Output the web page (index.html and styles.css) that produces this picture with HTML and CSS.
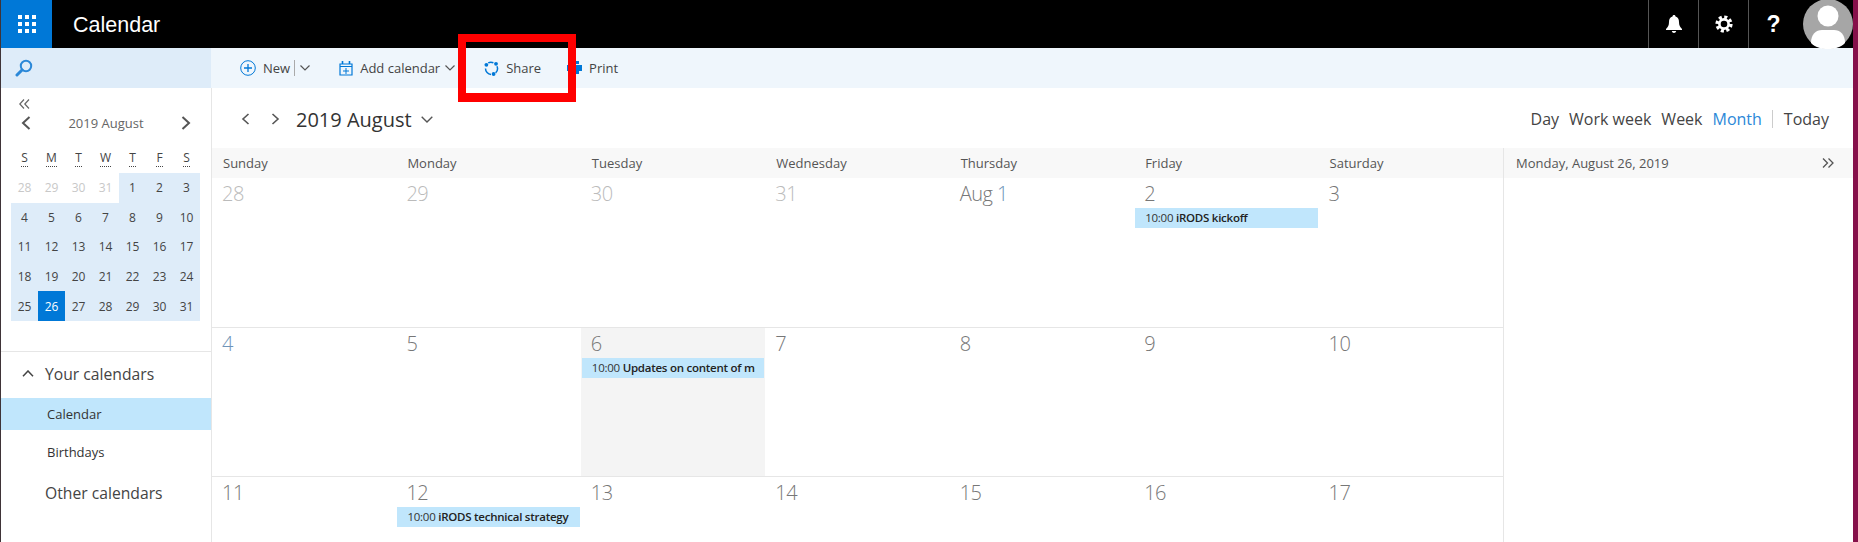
FILE: index.html
```html
<!DOCTYPE html>
<html lang="en">
<head>
<meta charset="UTF-8">
<title>Calendar</title>
<link rel="stylesheet" href="styles.css">
</head>
<body>
<div class="app">
  <header class="topbar">
    <div class="waffle">
      <svg width="18" height="18" viewBox="0 0 18 18" fill="#fff">
        <rect x="0" y="0" width="4" height="4"/><rect x="7" y="0" width="4" height="4"/><rect x="14" y="0" width="4" height="4"/>
        <rect x="0" y="7" width="4" height="4"/><rect x="7" y="7" width="4" height="4"/><rect x="14" y="7" width="4" height="4"/>
        <rect x="0" y="14" width="4" height="4"/><rect x="7" y="14" width="4" height="4"/><rect x="14" y="14" width="4" height="4"/>
      </svg>
    </div>
    <div class="app-name">Calendar</div>
    <div class="top-icons">
      <div class="top-btn">
        <svg width="16" height="18" viewBox="0 0 16 18" fill="#fff"><path d="M8 0c1 0 1.500.7 1.500 1.500C12 2.200 13 4.300 13 7c0 3.500 1 5 3 7v1H0v-1c2-2 3-3.500 3-7 0-2.700 1-4.800 3.500-5.500C6.500.7 7 0 8 0z"/><path d="M5.800 16h4.400c-.3 1.200-1.100 2-2.200 2s-1.900-.8-2.200-2z"/></svg>
      </div>
      <div class="top-btn">
        <svg width="18" height="18" viewBox="0 0 18 18" fill="none" stroke="#fff"><circle cx="9" cy="9" r="6.800" stroke-width="3.600" stroke-dasharray="3 2.340"/><circle cx="9" cy="9" r="4.600" stroke-width="2.600"/></svg>
      </div>
      <div class="top-btn help">?</div>
    </div>
    <div class="avatar">
      <svg width="50" height="50" viewBox="0 0 50 50"><circle cx="25" cy="25" r="25" fill="#a6a6a6"/><circle cx="25" cy="17" r="10.500" fill="#fff"/><path d="M8 44c0-9 5-13 11-13h12c6 0 11 4 11 13-4 4-10 6-17 6s-13-2-17-6z" fill="#fff"/></svg>
    </div>
  </header>

  <div class="toolbar">
    <div class="search-box">
      <svg width="18" height="18" viewBox="0 0 18 18" fill="none" stroke="#2b88d8"><circle cx="11" cy="7" r="5.200" stroke-width="2"/><path d="M7 11l-5 5" stroke-width="3" stroke-linecap="round"/></svg>
    </div>
    <div class="commands">
      <div class="cmd cmd-new">
        <svg width="16" height="16" viewBox="0 0 16 16" fill="none" stroke="#0078d7"><circle cx="8" cy="8" r="7.300"/><path d="M8 4v8M4 8h8" stroke-width="1.300"/></svg>
        <span>New</span><i class="pipe"></i>
        <svg class="chev" width="10" height="6" viewBox="0 0 10 6" fill="none" stroke="#555" stroke-width="1.200"><path d="M.5.500L5 5 9.500.500"/></svg>
      </div>
      <div class="cmd cmd-add">
        <svg width="14" height="15" viewBox="0 0 14 15" fill="none" stroke="#0078d7"><path d="M1 3h12v11H1zM1 5.500h12" stroke-width="1.200"/><path d="M3.500 0v3M10.500 0v3" stroke-width="1.600"/><path d="M7 7v6M4 10h6"/></svg>
        <span>Add calendar</span>
        <svg class="chev" width="10" height="6" viewBox="0 0 10 6" fill="none" stroke="#555" stroke-width="1.200"><path d="M.5.500L5 5 9.500.500"/></svg>
      </div>
      <div class="cmd cmd-share">
        <svg width="15" height="15" viewBox="0 0 15 15" fill="none" stroke="#0078d7" stroke-width="1.500"><path d="M4.200 1.900A6 6 0 0 1 9.400 1.800M13 5.200A6 6 0 0 1 11.600 11.900M7 13.500A6 6 0 0 1 1.500 7.500"/><circle cx="2.400" cy="3.800" r="1.900" fill="#0078d7" stroke="none"/><circle cx="12" cy="2.800" r="1.900" fill="#0078d7" stroke="none"/><circle cx="9.600" cy="13" r="1.900" fill="#0078d7" stroke="none"/></svg>
        <span>Share</span>
      </div>
      <div class="cmd cmd-print">
        <svg width="15" height="14" viewBox="0 0 15 14" fill="#0078d7"><rect x="3" y="0" width="9" height="3"/><rect x="0" y="4" width="15" height="6"/><rect x="3" y="8" width="9" height="5"/></svg>
        <span>Print</span>
      </div>
    </div>
  </div>

  <div class="content">
    <aside class="sidebar">
      <svg class="collapse" width="11" height="10" viewBox="0 0 11 10" fill="none" stroke="#666" stroke-width="1.200"><path d="M5 .5L.8 5 5 9.500M10 .5L5.800 5 10 9.500"/></svg>
      <div class="mini-head">
        <svg width="10" height="14" viewBox="0 0 10 14" fill="none" stroke="#555" stroke-width="2"><path d="M8.500 1L2 7l6.500 6"/></svg>
        <span>2019 August</span>
        <svg width="10" height="14" viewBox="0 0 10 14" fill="none" stroke="#555" stroke-width="2"><path d="M1.500 1L8 7l-6.500 6"/></svg>
      </div>
      <div class="mini-week">
        <span>S</span><span>M</span><span>T</span><span>W</span><span>T</span><span>F</span><span>S</span>
      </div>
      <div class="mini-days">
        <span class="out">28</span><span class="out">29</span><span class="out">30</span><span class="out">31</span><span>1</span><span>2</span><span>3</span>
        <span>4</span><span>5</span><span>6</span><span>7</span><span>8</span><span>9</span><span>10</span>
        <span>11</span><span>12</span><span>13</span><span>14</span><span>15</span><span>16</span><span>17</span>
        <span>18</span><span>19</span><span>20</span><span>21</span><span>22</span><span>23</span><span>24</span>
        <span>25</span><span class="cur">26</span><span>27</span><span>28</span><span>29</span><span>30</span><span>31</span>
      </div>
      <div class="cal-list">
        <div class="group">
          <svg width="12" height="7" viewBox="0 0 12 7" fill="none" stroke="#444" stroke-width="1.500"><path d="M1 6.300L6 1l5 5.300"/></svg>
          Your calendars
        </div>
        <div class="cal-item active">Calendar</div>
        <div class="cal-item">Birthdays</div>
        <div class="group other">Other calendars</div>
      </div>
    </aside>

    <main class="main">
      <div class="view-head">
        <div class="nav">
          <svg width="9" height="12" viewBox="0 0 9 12" fill="none" stroke="#555" stroke-width="1.600"><path d="M7.500 1L2 6l5.500 5"/></svg>
          <svg width="9" height="12" viewBox="0 0 9 12" fill="none" stroke="#555" stroke-width="1.600"><path d="M1.500 1L7 6l-5.500 5"/></svg>
          <h1>2019 August</h1>
          <svg width="12" height="7" viewBox="0 0 12 7" fill="none" stroke="#555" stroke-width="1.400"><path d="M.7.700L6 6 11.300.700"/></svg>
        </div>
        <div class="views">
          <span>Day</span><span>Work week</span><span>Week</span><span class="on">Month</span><i class="vsep"></i><span class="today">Today</span>
        </div>
      </div>
      <div class="cal-wrap">
        <div class="month">
          <div class="weekdays">
            <span>Sunday</span><span>Monday</span><span>Tuesday</span><span>Wednesday</span><span>Thursday</span><span>Friday</span><span>Saturday</span>
          </div>
          <div class="weeks">
            <div class="day dim">28</div>
            <div class="day dim">29</div>
            <div class="day dim">30</div>
            <div class="day dim">31</div>
            <div class="day">Aug <b class="blue">1</b></div>
            <div class="day">2<div class="event">10:00 <b>iRODS kickoff</b></div></div>
            <div class="day">3</div>

            <div class="day blue">4</div>
            <div class="day">5</div>
            <div class="day selected">6<div class="event">10:00 <b>Updates on content of m</b></div></div>
            <div class="day">7</div>
            <div class="day">8</div>
            <div class="day">9</div>
            <div class="day">10</div>

            <div class="day">11</div>
            <div class="day">12<div class="event">10:00 <b>iRODS technical strategy</b></div></div>
            <div class="day">13</div>
            <div class="day">14</div>
            <div class="day">15</div>
            <div class="day">16</div>
            <div class="day">17</div>
          </div>
        </div>
        <section class="agenda">
          <div class="agenda-head">
            <span>Monday, August 26, 2019</span>
            <svg width="12" height="10" viewBox="0 0 12 10" fill="none" stroke="#555" stroke-width="1.300"><path d="M1 .5L5.500 5 1 9.500M6.500 .5L11 5 6.500 9.500"/></svg>
          </div>
        </section>
      </div>
    </main>
  </div>
  <div class="callout"></div>
</div>
</body>
</html>
```

FILE: styles.css
```css
* {
    box-sizing: border-box;
    margin: 0;
    padding: 0;
}

html, body {
    height: 100%;
    overflow: hidden;
    background: #fff;
}

body {
    font-family: "Open Sans", "Liberation Sans", sans-serif;
    color: #444;
}

.app {
    position: relative;
    height: 542px;
    border-left: 1px solid #3f3438;
    border-right: 5px solid #86104a;
    overflow: hidden;
}

/* top bar */
.topbar {
    display: flex;
    align-items: center;
    height: 48px;
    background: #000;
    color: #fff;
}

.waffle {
    display: flex;
    align-items: center;
    justify-content: center;
    width: 51px;
    height: 48px;
    background: #0078d7;
}

.app-name {
    margin: 2px 0 0 21px;
    font-family: "Liberation Sans", sans-serif;
    font-size: 21.5px;
}

.top-icons {
    display: flex;
    margin-left: auto;
}

.top-btn {
    display: flex;
    align-items: center;
    justify-content: center;
    width: 50px;
    height: 48px;
    border-left: 1px solid #555;
}

.help {
    font-family: "Liberation Sans", sans-serif;
    font-size: 23px;
    font-weight: 700;
}

.avatar {
    width: 50px;
    height: 50px;
    margin-top: -1px;
    margin-left: 5px;
    flex: none;
}

/* toolbar */
.toolbar {
    display: flex;
    height: 40px;
    background: #eff6fc;
}

.search-box {
    display: flex;
    align-items: center;
    width: 210px;
    padding-left: 14px;
    background: #deecf9;
}

.commands {
    display: flex;
    align-items: center;
    padding-left: 29px;
    font-size: 13px;
    color: #444;
}

.cmd {
    display: flex;
    align-items: center;
}

.cmd svg {
    flex: none;
}

.cmd span {
    margin-left: 7px;
}

.cmd .chev {
    margin-left: 5px;
}

.pipe {
    width: 1px;
    height: 16px;
    margin-left: 4px;
    background: #aaa;
}

.cmd-add {
    margin-left: 29px;
}

.cmd-share {
    margin-left: 29px;
}

.cmd-print {
    margin-left: 26px;
}

/* sidebar */
.content {
    display: flex;
    height: 454px;
}

.sidebar {
    flex: none;
    width: 211px;
    border-right: 1px solid #e6e6e6;
}

.collapse {
    display: block;
    margin: 11px 0 0 18px;
}

.mini-head {
    display: flex;
    align-items: center;
    justify-content: space-between;
    width: 189px;
    margin: 2px 0 0 10px;
    padding: 0 9px 0 10px;
    height: 24px;
    font-size: 13px;
    color: #666;
}

.mini-week,
.mini-days {
    display: grid;
    grid-template-columns: repeat(7, 27px);
    width: 189px;
    margin-left: 10px;
    text-align: center;
    font-size: 12px;
}

.mini-week {
    height: 24px;
    margin-top: 14px;
    padding-top: 1px;
    line-height: 20px;
}

.mini-week span {
    justify-self: center;
    height: 17px;
    line-height: 16px;
    border-bottom: 1px dotted #444;
}

.mini-days {
    grid-auto-rows: 29.6px;
}

.mini-days span {
    display: flex;
    align-items: center;
    justify-content: center;
    background: #deecf9;
}

.mini-days .out {
    background: #fff;
    color: #c8c8c8;
}

.mini-days .cur {
    background: #0078d7;
    color: #fff;
}

.cal-list {
    margin-top: 30px;
    padding-top: 10px;
    border-top: 1px solid #e6e6e6;
}

.group {
    display: flex;
    align-items: center;
    gap: 11px;
    height: 24px;
    padding-left: 21px;
    font-size: 15.7px;
    color: #444;
}

.cal-item {
    height: 32px;
    line-height: 32px;
    padding-left: 46px;
    font-size: 13px;
    color: #333;
}

.cal-item.active {
    margin-top: 12px;
    background: #c0e6fc;
}

.cal-item + .cal-item {
    margin-top: 6px;
}

.group.other {
    margin-top: 13px;
    padding-left: 44px;
}

/* main */
.main {
    flex: 1;
    min-width: 0;
}

.view-head {
    display: flex;
    align-items: center;
    justify-content: space-between;
    height: 60px;
}

.nav {
    display: flex;
    align-items: center;
    padding: 2px 0 0 29px;
}

.nav svg + svg {
    margin-left: 21px;
}

.nav h1 {
    margin-left: 16px;
    font-size: 20px;
    font-weight: 400;
    color: #333;
}

.nav h1 + svg {
    margin-left: 9px;
}

.views {
    display: flex;
    align-items: center;
    gap: 10px;
    padding: 2px 24px 0 0;
    font-size: 16px;
    color: #444;
}

.views .on {
    color: #2b88d8;
}

.vsep {
    width: 1px;
    height: 18px;
    background: #ccc;
}

.today {
    margin-left: 1px;
}

.cal-wrap {
    display: flex;
}

.month {
    width: 1291px;
    flex: none;
}

.weekdays {
    display: grid;
    grid-template-columns: repeat(7, minmax(0, 1fr));
    height: 30px;
    background: #f8f8f8;
    font-size: 13px;
    line-height: 30px;
    color: #555;
}

.weekdays span {
    padding-left: 11px;
}

.weeks {
    display: grid;
    grid-template-columns: repeat(7, minmax(0, 1fr));
    grid-auto-rows: 149.5px;
}

.day {
    padding: 1px 0 0 10px;
    border-bottom: 1px solid #e6e6e6;
    font-size: 20px;
    font-weight: 300;
    letter-spacing: -.5px;
    line-height: 29px;
    color: #777;
}

.day b {
    font-weight: 300;
}

.day.dim {
    color: #bbb;
}

.blue {
    color: #6f94b8;
}

.day.blue {
    color: #6f94b8;
}

.day.selected {
    background: #f4f4f4;
}

.event {
    height: 20px;
    margin: 0 1px 0 -9px;
    padding-left: 10px;
    background: #c0e6fc;
    font-size: 11.5px;
    font-weight: 400;
    letter-spacing: -.25px;
    line-height: 20px;
    color: #333;
    white-space: nowrap;
    overflow: hidden;
}

.event b {
    font-weight: 600;
    color: #222;
}

.agenda {
    flex: 1;
    border-left: 1px solid #e6e6e6;
    height: 394px;
}

.agenda-head {
    display: flex;
    align-items: center;
    justify-content: space-between;
    height: 30px;
    padding: 0 19px 0 12px;
    background: #f8f8f8;
    font-size: 13px;
    color: #555;
}

/* red annotation drawn on top of the screenshot */
.callout {
    position: absolute;
    left: 457px;
    top: 34px;
    width: 118px;
    height: 68px;
    border: solid #f00;
    border-width: 8px 8px 9px;
}
```
